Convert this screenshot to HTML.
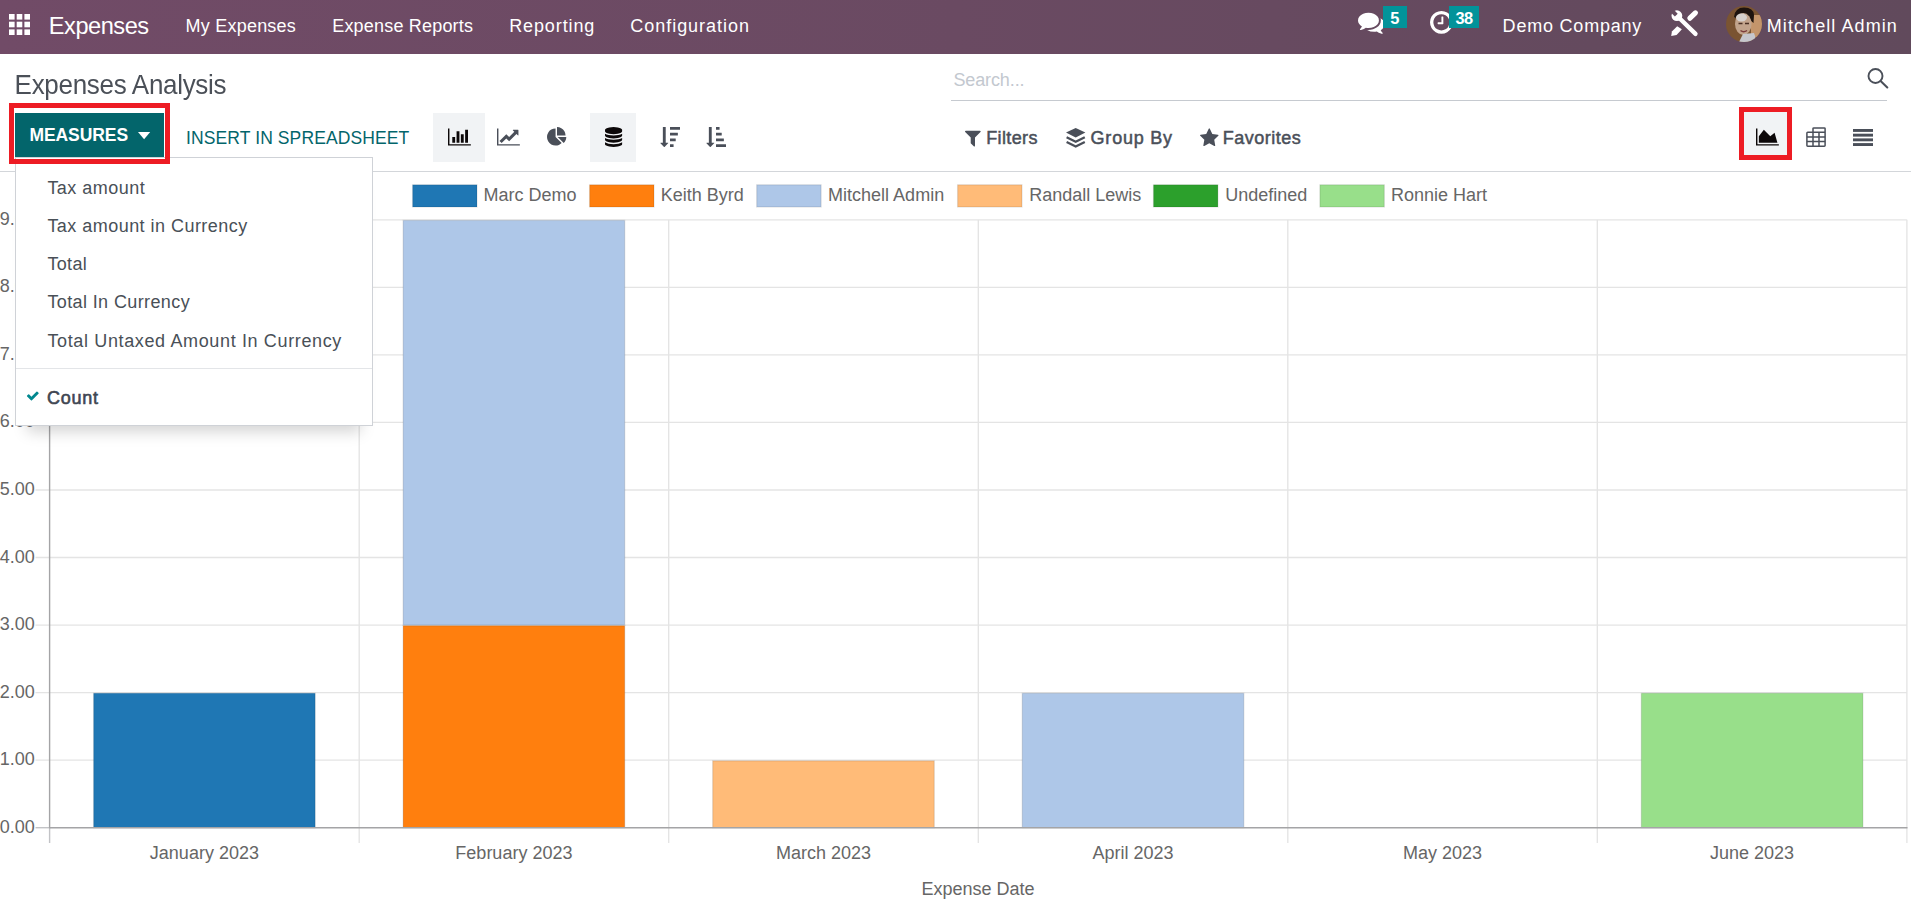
<!DOCTYPE html>
<html lang="en"><head><meta charset="utf-8"><title>Expenses Analysis</title>
<style>
html,body{margin:0;padding:0}
body{width:1911px;height:905px;position:relative;overflow:hidden;background:#fff;font-family:"Liberation Sans",sans-serif;color:#495057}
.abs,.t,.ic{position:absolute}
.t{white-space:nowrap;line-height:1;margin:0;padding:0;font-weight:normal}
.b{font-weight:bold}
.sb{font-weight:normal;color:#4a4f59;-webkit-text-stroke:0.5px #4a4f59}
.sb2{font-weight:normal;-webkit-text-stroke:0.6px #3f4652}
#ddmenu #dd5{color:#3f4652}
.ic{display:block;overflow:visible}
#chart{left:0;top:0;font-family:"Liberation Sans",sans-serif;font-size:18px;fill:#666}
#chart .grid line{stroke:#e4e4e4;stroke-width:1.33}
#chart rect{stroke:rgba(0,0,0,.1);stroke-width:1.3}
#chart .zero line{stroke:#c2c3c6;stroke-width:1.4}
#chart .axis line{stroke:#a4a4a6;stroke-width:1.4}
#navbar{left:0;top:0;width:1911px;height:53.6px;background:linear-gradient(to right,#714b67 0%,#6a4a62 50%,#614a5c 100%)}
#navbar .t{color:#fff}
.badge{background:#02939a}
#navbar .bt{font-weight:bold}
#avatar{left:1726.1px;top:6.2px;width:36px;height:36px}
#cp{left:0;top:0;width:1911px;height:172px}
#title{color:#4b5058;transform:scaleY(1.055);transform-origin:0 84.65%}
#search{left:951px;top:60px;width:936px;height:39.7px;border-bottom:1.4px solid #c6cad0}
#ph{color:#c3c8cf}
#measures{left:15px;top:113.1px;width:149px;height:43.5px;background:#03656b}
#measures_t{color:#fff}
#insert{color:#03656b}
.actbg{background:#f1f3f5}
#sep{left:0;top:170.5px;width:1911px;height:1.4px;background:#d3d6da}
#ddmenu{left:15px;top:157px;width:356.4px;height:267px;background:#fff;border:1px solid #cfd2d7;box-shadow:0 18px 14px -12px rgba(0,0,0,.17)}
#ddmenu .t{color:#495057}
.ddsep{left:0;width:356.4px;height:1.3px;background:#e3e5e8}
.red{border:5px solid #ed1c24;box-sizing:border-box}
#redbox1{left:9px;top:103.3px;width:161px;height:60.5px}
#redbox2{left:1739px;top:107.1px;width:53px;height:52.9px}
#brand{left:48.80px;top:15.32px;font-size:23.6px;letter-spacing:-0.476px}
#m1{left:185.60px;top:17.16px;font-size:18px;letter-spacing:0.216px}
#m2{left:332.20px;top:17.16px;font-size:18px;letter-spacing:0.193px}
#m3{left:509.20px;top:17.16px;font-size:18px;letter-spacing:0.887px}
#m4{left:630.20px;top:17.16px;font-size:18px;letter-spacing:0.984px}
#b1{left:1390.30px;top:10.32px;font-size:16.4px;letter-spacing:0.000px}
#b2{left:1455.60px;top:10.32px;font-size:16.4px;letter-spacing:-0.600px}
#company{left:1502.60px;top:17.16px;font-size:18px;letter-spacing:0.789px}
#user{left:1766.80px;top:17.16px;font-size:18px;letter-spacing:1.075px}
#title{left:14.60px;top:72.09px;font-size:26px;letter-spacing:-0.302px}
#ph{left:953.40px;top:70.86px;font-size:18px;letter-spacing:-0.112px}
#measures_t{left:29.40px;top:126.99px;font-size:17.5px;letter-spacing:-0.071px}
#insert{left:186.00px;top:130.19px;font-size:17.5px;letter-spacing:0.108px}
#filters{left:986.20px;top:129.26px;font-size:18px;letter-spacing:0.375px}
#groupby{left:1090.60px;top:129.26px;font-size:18px;letter-spacing:0.771px}
#favs{left:1222.80px;top:129.26px;font-size:18px;letter-spacing:0.485px}
#dd0{left:31.40px;top:20.66px;font-size:18px;letter-spacing:0.470px}
#dd1{left:31.40px;top:58.66px;font-size:18px;letter-spacing:0.465px}
#dd2{left:31.40px;top:97.06px;font-size:18px;letter-spacing:0.351px}
#dd3{left:31.40px;top:135.46px;font-size:18px;letter-spacing:0.387px}
#dd4{left:31.40px;top:173.96px;font-size:18px;letter-spacing:0.639px}
#dd5{left:31.00px;top:230.66px;font-size:18px;letter-spacing:0.765px}
</style></head>
<body>
<svg id="chart" class="abs" width="1911" height="905" viewBox="0 0 1911 905">
<g class="grid">
<line x1="359.2" y1="219.8" x2="359.2" y2="843"/>
<line x1="668.7" y1="219.8" x2="668.7" y2="843"/>
<line x1="978.3" y1="219.8" x2="978.3" y2="843"/>
<line x1="1287.8" y1="219.8" x2="1287.8" y2="843"/>
<line x1="1597.3" y1="219.8" x2="1597.3" y2="843"/>
<line x1="1906.9" y1="219.8" x2="1906.9" y2="843"/>
<line x1="35.5" y1="760.2" x2="1906.9" y2="760.2"/>
<line x1="35.5" y1="692.6" x2="1906.9" y2="692.6"/>
<line x1="35.5" y1="625.1" x2="1906.9" y2="625.1"/>
<line x1="35.5" y1="557.5" x2="1906.9" y2="557.5"/>
<line x1="35.5" y1="490.0" x2="1906.9" y2="490.0"/>
<line x1="35.5" y1="422.4" x2="1906.9" y2="422.4"/>
<line x1="35.5" y1="354.9" x2="1906.9" y2="354.9"/>
<line x1="35.5" y1="287.3" x2="1906.9" y2="287.3"/>
<line x1="35.5" y1="219.8" x2="1906.9" y2="219.8"/>
</g>
<rect x="93.59" y="693.25" width="221.58" height="134.45" fill="#1f77b4"/>
<rect x="403.14" y="625.70" width="221.58" height="202.00" fill="#ff7f0e"/>
<rect x="403.14" y="220.40" width="221.58" height="404.65" fill="#aec7e8"/>
<rect x="712.69" y="760.80" width="221.58" height="66.90" fill="#ffbb78"/>
<rect x="1022.24" y="693.25" width="221.58" height="134.45" fill="#aec7e8"/>
<rect x="1641.34" y="693.25" width="221.58" height="134.45" fill="#98df8a"/>
<g class="zero"><line x1="49.6" y1="827.7" x2="49.6" y2="843"/><line x1="35.5" y1="827.7" x2="49.6" y2="827.7"/></g>
<g class="axis"><line x1="49.6" y1="219.2" x2="49.6" y2="828.3000000000001"/><line x1="49.6" y1="827.7" x2="1907.5" y2="827.7"/></g>
<g text-anchor="end">
<text x="34.8" y="832.7">0.00</text>
<text x="34.8" y="765.2">1.00</text>
<text x="34.8" y="697.6">2.00</text>
<text x="34.8" y="630.1">3.00</text>
<text x="34.8" y="562.5">4.00</text>
<text x="34.8" y="495.0">5.00</text>
<text x="34.8" y="427.4">6.00</text>
<text x="34.8" y="359.9">7.00</text>
<text x="34.8" y="292.3">8.00</text>
<text x="34.8" y="224.8">9.00</text>
</g><g text-anchor="middle">
<text x="204.4" y="859.2">January 2023</text>
<text x="513.9" y="859.2">February 2023</text>
<text x="823.5" y="859.2">March 2023</text>
<text x="1133.0" y="859.2">April 2023</text>
<text x="1442.6" y="859.2">May 2023</text>
<text x="1752.1" y="859.2">June 2023</text>
<text x="978" y="894.9">Expense Date</text></g>
<rect x="412.6" y="184.8" width="64.4" height="22.2" fill="#1f77b4"/><text x="483.6" y="201.3">Marc Demo</text>
<rect x="589.6" y="184.8" width="64.4" height="22.2" fill="#ff7f0e"/><text x="660.7" y="201.3">Keith Byrd</text>
<rect x="756.7" y="184.8" width="64.4" height="22.2" fill="#aec7e8"/><text x="828.1" y="201.3">Mitchell Admin</text>
<rect x="957.6" y="184.8" width="64.4" height="22.2" fill="#ffbb78"/><text x="1029.3" y="201.3">Randall Lewis</text>
<rect x="1153.5" y="184.8" width="64.4" height="22.2" fill="#2ca02c"/><text x="1225.2" y="201.3">Undefined</text>
<rect x="1319.9" y="184.8" width="64.4" height="22.2" fill="#98df8a"/><text x="1391.0" y="201.3">Ronnie Hart</text>
</svg>
<header id="navbar" class="abs">
<svg class="ic" style="left:9px;top:14px;width:21px;height:21px" viewBox="0 0 21 21"><g fill="#fff"><rect x="0.0" y="0.0" width="5.6" height="5.6"/><rect x="7.7" y="0.0" width="5.6" height="5.6"/><rect x="15.4" y="0.0" width="5.6" height="5.6"/><rect x="0.0" y="7.7" width="5.6" height="5.6"/><rect x="7.7" y="7.7" width="5.6" height="5.6"/><rect x="15.4" y="7.7" width="5.6" height="5.6"/><rect x="0.0" y="15.4" width="5.6" height="5.6"/><rect x="7.7" y="15.4" width="5.6" height="5.6"/><rect x="15.4" y="15.4" width="5.6" height="5.6"/></g></svg>
<span id="brand" class="t">Expenses</span>
<span id="m1" class="t nav">My Expenses</span>
<span id="m2" class="t nav">Expense Reports</span>
<span id="m3" class="t nav">Reporting</span>
<span id="m4" class="t nav">Configuration</span>
<svg class="ic" style="left:1358.20px;top:9.30px;width:26.67px;height:26.67px" viewBox="0 -1536 1792 1792"><path fill="#fff" transform="scale(1,-1)" d="M1408 768q0 -139 -94 -257t-256.5 -186.5t-353.5 -68.5q-86 0 -176 16q-124 -88 -278 -128q-36 -9 -86 -16h-3q-11 0 -20.5 8t-11.5 21q-1 3 -1 6.5t0.5 6.5t2 6l2.5 5t3.5 5.5t4 5t4.5 5t4 4.5q5 6 23 25t26 29.5t22.5 29t25 38.5t20.5 44q-124 72 -195 177t-71 224
q0 139 94 257t256.5 186.5t353.5 68.5t353.5 -68.5t256.5 -186.5t94 -257zM1792 512q0 -120 -71 -224.5t-195 -176.5q10 -24 20.5 -44t25 -38.5t22.5 -29t26 -29.5t23 -25q1 -1 4 -4.5t4.5 -5t4 -5t3.5 -5.5l2.5 -5t2 -6t0.5 -6.5t-1 -6.5q-3 -14 -13 -22t-22 -7
q-50 7 -86 16q-154 40 -278 128q-90 -16 -176 -16q-271 0 -472 132q58 -4 88 -4q161 0 309 45t264 129q125 92 192 212t67 254q0 77 -23 152q129 -71 204 -178t75 -230z"/></svg>
<span class="abs badge" style="left:1383px;top:6px;width:23.6px;height:22px"></span>
<span id="b1" class="t bt">5</span>
<svg class="ic" style="left:1430.00px;top:9.20px;width:22.86px;height:26.67px" viewBox="0 -1536 1536 1792"><path fill="#fff" transform="scale(1,-1)" d="M896 992v-448q0 -14 -9 -23t-23 -9h-320q-14 0 -23 9t-9 23v64q0 14 9 23t23 9h224v352q0 14 9 23t23 9h64q14 0 23 -9t9 -23zM1312 640q0 148 -73 273t-198 198t-273 73t-273 -73t-198 -198t-73 -273t73 -273t198 -198t273 -73t273 73t198 198t73 273zM1536 640
q0 -209 -103 -385.5t-279.5 -279.5t-385.5 -103t-385.5 103t-279.5 279.5t-103 385.5t103 385.5t279.5 279.5t385.5 103t385.5 -103t279.5 -279.5t103 -385.5z"/></svg>
<span class="abs badge" style="left:1449px;top:6px;width:30.1px;height:22px"></span>
<span id="b2" class="t bt">38</span>
<span id="company" class="t nav">Demo Company</span>
<svg class="ic" style="left:1670px;top:9px;width:29px;height:28px" viewBox="0 0 29 28">
<mask id="wm"><rect width="29" height="28" fill="#fff"/><line x1="6.3" y1="6.1" x2="0.5" y2="0.3" stroke="#000" stroke-width="4"/></mask>
<g mask="url(#wm)"><circle cx="6.9" cy="6.7" r="5.4" fill="#fff"/></g>
<g fill="none" stroke="#fff" stroke-linecap="round">
<path d="M9.5 9.3 L25.5 24.9" stroke-width="4.3"/>
<path d="M25.4 3.9 L19.9 9.2" stroke-width="5.2"/>
</g>
<path d="M7.2 17.3 L11.9 20.3 L6.6 26 L1.2 27 L1.9 22.4z" fill="#fff"/>
</svg>
<svg id="avatar" class="ic" viewBox="0 0 36 36"><clipPath id="avc"><circle cx="18" cy="18" r="18"/></clipPath>
<g clip-path="url(#avc)"><rect width="36" height="36" fill="#7a5432"/>
<rect x="25" y="9" width="11" height="22" fill="#c4956b"/>
<path d="M8 11 Q9 1.5 18 1.5 Q27.5 1.5 28 9 L27.5 17 L24 14 L10 12z" fill="#1d130e"/>
<ellipse cx="17.3" cy="18" rx="8.3" ry="11" fill="#c2a48c"/>
<ellipse cx="15.5" cy="11.5" rx="5.5" ry="4" fill="#d6d0cc"/>
<path d="M13 36 L17 28 L28 27 L31 36z" fill="#c6c7cd"/>
<path d="M12.5 17.5h4M19 17.5h4" stroke="#4a2f22" stroke-width="1.6"/>
<path d="M14.5 24.5 Q17.5 27 21 24.5" stroke="#7a3b3b" stroke-width="1.4" fill="none"/>
</g></svg>
<span id="user" class="t nav">Mitchell Admin</span>
</header>
<main id="cp" class="abs">
<h1 id="title" class="t">Expenses Analysis</h1>
<div id="search" class="abs"></div>
<span id="ph" class="t">Search...</span>
<svg class="ic" style="left:1866px;top:67px;width:23px;height:22px" viewBox="0 0 23 22"><circle cx="9.5" cy="9" r="7" fill="none" stroke="#4a4f59" stroke-width="1.9"/><path d="M14.6 14 L21.3 20.4" stroke="#4a4f59" stroke-width="2.1" stroke-linecap="round"/></svg>
<div id="measures" class="abs"></div>
<span id="measures_t" class="t b">MEASURES</span>
<svg class="ic" style="left:137.8px;top:131.9px;width:12.2px;height:7.2px" viewBox="0 0 12 7"><path d="M0 0H12L6 7z" fill="#fff"/></svg>
<span id="insert" class="t">INSERT IN SPREADSHEET</span>
<div class="abs actbg" style="left:432.9px;top:112.9px;width:51.9px;height:49px"></div>
<div class="abs actbg" style="left:590.1px;top:112.9px;width:45.9px;height:49px"></div>
<svg class="ic" style="left:447.80px;top:126.75px;width:22.86px;height:20px" viewBox="0 -1536 2048 1792"><path fill="#0c0809" transform="scale(1,-1)" d="M640 640v-512h-256v512h256zM1024 1152v-1024h-256v1024h256zM2048 0v-128h-2048v1536h128v-1408h1920zM1408 896v-768h-256v768h256zM1792 1280v-1152h-256v1152h256z"/></svg>
<svg class="ic" style="left:497.40px;top:126.75px;width:22.86px;height:20px" viewBox="0 -1536 2048 1792"><path fill="#4a4f59" transform="scale(1,-1)" d="M2048 0v-128h-2048v1536h128v-1408h1920zM1920 1248v-435q0 -21 -19.5 -29.5t-35.5 7.5l-121 121l-633 -633q-10 -10 -23 -10t-23 10l-233 233l-416 -416l-192 192l585 585q10 10 23 10t23 -10l233 -233l464 464l-121 121q-16 16 -7.5 35.5t29.5 19.5h435q14 0 23 -9
t9 -23z"/></svg>
<svg class="ic" style="left:547.10px;top:126.75px;width:20.00px;height:20px" viewBox="0 -1536 1792 1792"><path fill="#4a4f59" transform="scale(1,-1)" d="M768 646l546 -546q-106 -108 -247.5 -168t-298.5 -60q-209 0 -385.5 103t-279.5 279.5t-103 385.5t103 385.5t279.5 279.5t385.5 103v-762zM955 640h773q0 -157 -60 -298.5t-168 -247.5zM1664 768h-768v768q209 0 385.5 -103t279.5 -279.5t103 -385.5z"/></svg>
<svg class="ic" style="left:604.50px;top:126.75px;width:17.14px;height:20px" viewBox="0 -1536 1536 1792"><path fill="#0c0809" transform="scale(1,-1)" d="M768 768q237 0 443 43t325 127v-170q0 -69 -103 -128t-280 -93.5t-385 -34.5t-385 34.5t-280 93.5t-103 128v170q119 -84 325 -127t443 -43zM768 0q237 0 443 43t325 127v-170q0 -69 -103 -128t-280 -93.5t-385 -34.5t-385 34.5t-280 93.5t-103 128v170q119 -84 325 -127
t443 -43zM768 384q237 0 443 43t325 127v-170q0 -69 -103 -128t-280 -93.5t-385 -34.5t-385 34.5t-280 93.5t-103 128v170q119 -84 325 -127t443 -43zM768 1536q208 0 385 -34.5t280 -93.5t103 -128v-128q0 -69 -103 -128t-280 -93.5t-385 -34.5t-385 34.5t-280 93.5
t-103 128v128q0 69 103 128t280 93.5t385 34.5z"/></svg>
<svg class="ic" style="left:659.70px;top:126.75px;width:20.00px;height:20px" viewBox="0 -1536 1792 1792"><path fill="#4a4f59" transform="scale(1,-1)" d="M1216 -32v-192q0 -14 -9 -23t-23 -9h-256q-14 0 -23 9t-9 23v192q0 14 9 23t23 9h256q14 0 23 -9t9 -23zM736 96q0 -12 -10 -24l-319 -319q-10 -9 -23 -9q-12 0 -23 9l-320 320q-15 16 -7 35q8 20 30 20h192v1376q0 14 9 23t23 9h192q14 0 23 -9t9 -23v-1376h192
q14 0 23 -9t9 -23zM1408 480v-192q0 -14 -9 -23t-23 -9h-448q-14 0 -23 9t-9 23v192q0 14 9 23t23 9h448q14 0 23 -9t9 -23zM1600 992v-192q0 -14 -9 -23t-23 -9h-640q-14 0 -23 9t-9 23v192q0 14 9 23t23 9h640q14 0 23 -9t9 -23zM1792 1504v-192q0 -14 -9 -23t-23 -9h-832
q-14 0 -23 9t-9 23v192q0 14 9 23t23 9h832q14 0 23 -9t9 -23z"/></svg>
<svg class="ic" style="left:706.40px;top:126.75px;width:20.00px;height:20px" viewBox="0 -1536 1792 1792"><path fill="#4a4f59" transform="scale(1,-1)" d="M736 96q0 -12 -10 -24l-319 -319q-10 -9 -23 -9q-12 0 -23 9l-320 320q-15 16 -7 35q8 20 30 20h192v1376q0 14 9 23t23 9h192q14 0 23 -9t9 -23v-1376h192q14 0 23 -9t9 -23zM1792 -32v-192q0 -14 -9 -23t-23 -9h-832q-14 0 -23 9t-9 23v192q0 14 9 23t23 9h832
q14 0 23 -9t9 -23zM1600 480v-192q0 -14 -9 -23t-23 -9h-640q-14 0 -23 9t-9 23v192q0 14 9 23t23 9h640q14 0 23 -9t9 -23zM1408 992v-192q0 -14 -9 -23t-23 -9h-448q-14 0 -23 9t-9 23v192q0 14 9 23t23 9h448q14 0 23 -9t9 -23zM1216 1504v-192q0 -14 -9 -23t-23 -9h-256
q-14 0 -23 9t-9 23v192q0 14 9 23t23 9h256q14 0 23 -9t9 -23z"/></svg>
<svg class="ic" style="left:965.10px;top:127.60px;width:15.71px;height:20px" viewBox="0 -1536 1408 1792"><path fill="#4a4f59" transform="scale(1,-1)" d="M1403 1241q17 -41 -14 -70l-493 -493v-742q0 -42 -39 -59q-13 -5 -25 -5q-27 0 -45 19l-256 256q-19 19 -19 45v486l-493 493q-31 29 -14 70q17 39 59 39h1280q42 0 59 -39z"/></svg>
<span id="filters" class="t sb">Filters</span>
<svg class="ic" style="left:1066.2px;top:127.8px;width:19.4px;height:20px" viewBox="0 0 19.4 20"><path d="M9.7 0 L19.4 4.6 L9.7 9.4 L0 4.6z" fill="#4a4f59"/><path d="M0.6 9.2 L9.7 13.7 L18.8 9.2 M0.6 14 L9.7 18.5 L18.8 14" fill="none" stroke="#4a4f59" stroke-width="2.3"/></svg>
<span id="groupby" class="t sb">Group By</span>
<svg class="ic" style="left:1199.60px;top:127.90px;width:18.57px;height:20px" viewBox="0 -1536 1664 1792"><path fill="#4a4f59" transform="scale(1,-1)" d="M1664 889q0 -22 -26 -48l-363 -354l86 -500q1 -7 1 -20q0 -21 -10.5 -35.5t-30.5 -14.5q-19 0 -40 12l-449 236l-449 -236q-22 -12 -40 -12q-21 0 -31.5 14.5t-10.5 35.5q0 6 2 20l86 500l-364 354q-25 27 -25 48q0 37 56 46l502 73l225 455q19 41 49 41t49 -41l225 -455
l502 -73q56 -9 56 -46z"/></svg>
<span id="favs" class="t sb">Favorites</span>
<div class="abs actbg" style="left:1744px;top:112px;width:43.5px;height:43.5px"></div>
<svg class="ic" style="left:1756.20px;top:126.60px;width:22.86px;height:20px" viewBox="0 -1536 2048 1792"><path fill="#0c0809" transform="scale(1,-1)" d="M2048 0v-128h-2048v1536h128v-1408h1920zM1664 1024l256 -896h-1664v576l448 576l576 -576z"/></svg>
<svg class="ic" style="left:1806px;top:126.8px;width:20px;height:20.2px" viewBox="0 0 20 20.2"><g fill="none" stroke="#4a4f59" stroke-width="1.5"><path d="M7 5.2V1.6Q7 .9 7.8 .9H18.3Q19.1 .9 19.1 1.6V18.6Q19.1 19.3 18.3 19.3H1.7Q.9 19.3 .9 18.6V6Q.9 5.2 1.7 5.2H19.1"/><path d="M7 5.2V19.3M13 5.2V19.3M.9 9.9H19.1M.9 14.6H19.1"/></g></svg>
<svg class="ic" style="left:1853px;top:129px;width:20px;height:17px" viewBox="0 0 20 17"><g fill="#4a4f59"><rect x="0" y="0.0" width="20" height="2.9"/><rect x="0" y="4.7" width="20" height="2.9"/><rect x="0" y="9.4" width="20" height="2.9"/><rect x="0" y="14.1" width="20" height="2.9"/></g></svg>
<div id="sep" class="abs"></div>
</main>
<div id="ddmenu" class="abs">
<span id="dd0" class="t">Tax amount</span>
<span id="dd1" class="t">Tax amount in Currency</span>
<span id="dd2" class="t">Total</span>
<span id="dd3" class="t">Total In Currency</span>
<span id="dd4" class="t">Total Untaxed Amount In Currency</span>
<div class="abs ddsep" style="top:209.7px"></div>
<svg class="ic" style="left:9.68px;top:231.41px;width:13.64px;height:13.64px" viewBox="0 -1536 1792 1792"><path fill="#01888f" transform="scale(1,-1)" d="M1671 970q0 -40 -28 -68l-724 -724l-136 -136q-28 -28 -68 -28t-68 28l-136 136l-362 362q-28 28 -28 68t28 68l136 136q28 28 68 28t68 -28l294 -295l656 657q28 28 68 28t68 -28l136 -136q28 -28 28 -68z"/></svg>
<span id="dd5" class="t sb2">Count</span>
</div>
<div id="redbox1" class="abs red"></div>
<div id="redbox2" class="abs red"></div>
</body></html>
